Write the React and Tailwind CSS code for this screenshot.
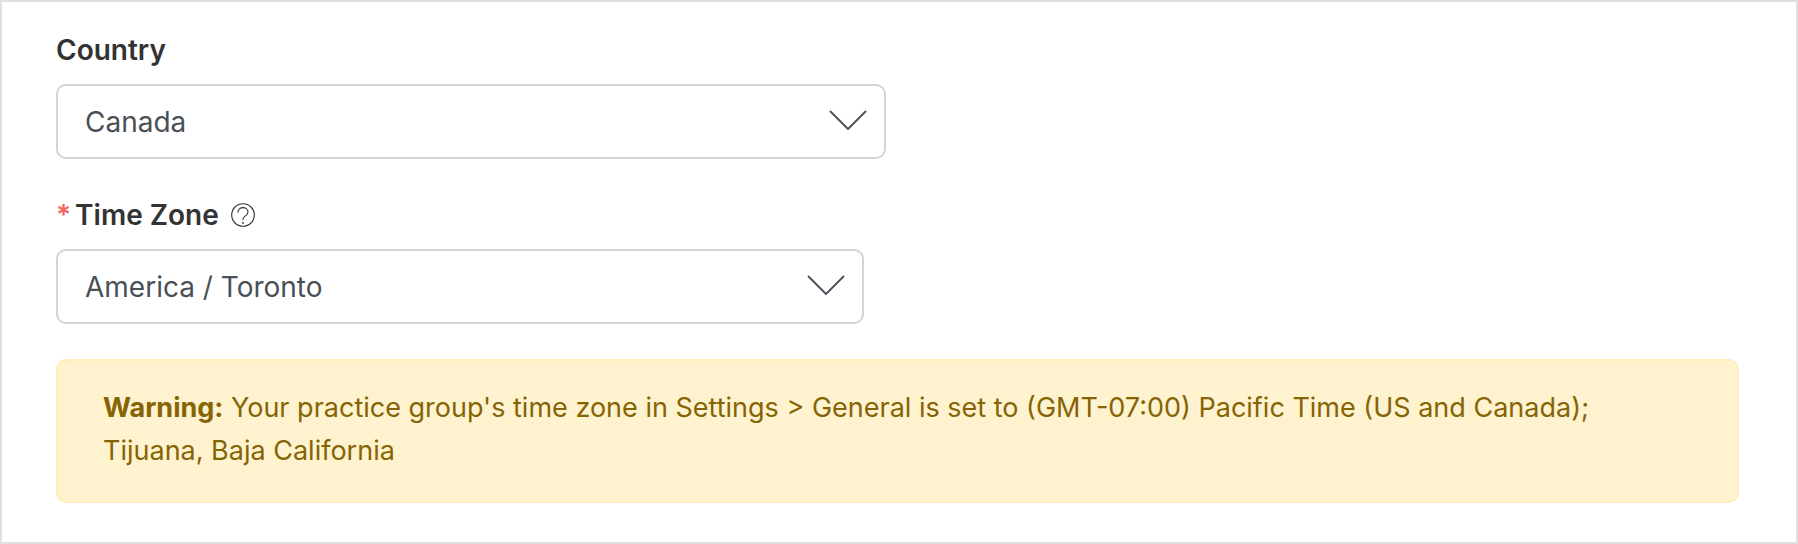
import React from "react";

function SelectField({ id, value, className, required }) {
  return (
    <div className={`relative w-full ${className}`}>
      <select
        id={id}
        defaultValue={value}
        required={required}
        className="block w-full h-[75px] appearance-none rounded-[10px] border-2 border-[#ced4da] bg-white pl-[27px] pr-20 text-[28px] text-[#495057]"
      >
        <option value={value}>{value}</option>
      </select>
      <svg
        className="pointer-events-none absolute right-[19px] top-[26px] h-5 w-[38px]"
        viewBox="0 0 38 20"
        fill="none"
        stroke="#495057"
        strokeWidth="1.8"
        strokeLinecap="round"
        strokeLinejoin="round"
        aria-hidden="true"
      >
        <path d="M1.5 1.5 19 19 36.5 1.5" />
      </svg>
    </div>
  );
}

function HelpIcon() {
  return (
    <svg
      className="h-6 w-6"
      viewBox="0 0 24 24"
      fill="none"
      stroke="#333333"
      strokeWidth="1.1"
      strokeLinecap="round"
      aria-hidden="true"
    >
      <circle cx="12" cy="12" r="11.3" />
      <path d="M7 9.2C7 6.5 9.2 4.6 12 4.6s5 1.9 5 4.5c0 3.9-5 3.6-5 7.2v.5" />
      <path d="M12 19.4v.9" strokeWidth="1.5" />
    </svg>
  );
}

function App() {
  return (
    <div className="min-h-screen border-2 border-[#e0e0e0] bg-white pt-7 pr-[57px] pb-[39px] pl-[54px] font-['Inter',sans-serif]">
      <form>
        <div className="mb-9">
          <label
            htmlFor="country"
            className="mb-[14px] block text-[28px] leading-10 font-semibold text-[#333333]"
          >
            Country
          </label>
          <SelectField id="country" value="Canada" className="max-w-[830px]" />
        </div>

        <div className="mb-[35px]">
          <div className="mb-[14px] flex items-center">
            <label
              htmlFor="timezone"
              className="flex gap-1 text-[28px] leading-10 font-semibold text-[#333333]"
            >
              <span className="text-[#f0695f]">*</span>
              Time Zone
            </label>
            <button type="button" aria-label="Time zone help" className="ml-3">
              <HelpIcon />
            </button>
          </div>
          <SelectField
            id="timezone"
            value="America / Toronto"
            className="max-w-[808px]"
            required
          />
        </div>

        <div
          role="alert"
          className="rounded-[10px] border-2 border-[#ffeeba] bg-[#fff2cf] px-[45px] pt-[25px] pb-[29px] text-[27px] leading-[43px] text-[#856404]"
        >
          <strong className="font-bold">Warning:</strong> Your practice group's
          time zone in Settings &gt; General is set to (GMT-07:00) Pacific Time
          (US and Canada); Tijuana, Baja California
        </div>
      </form>
    </div>
  );
}

export default App;
